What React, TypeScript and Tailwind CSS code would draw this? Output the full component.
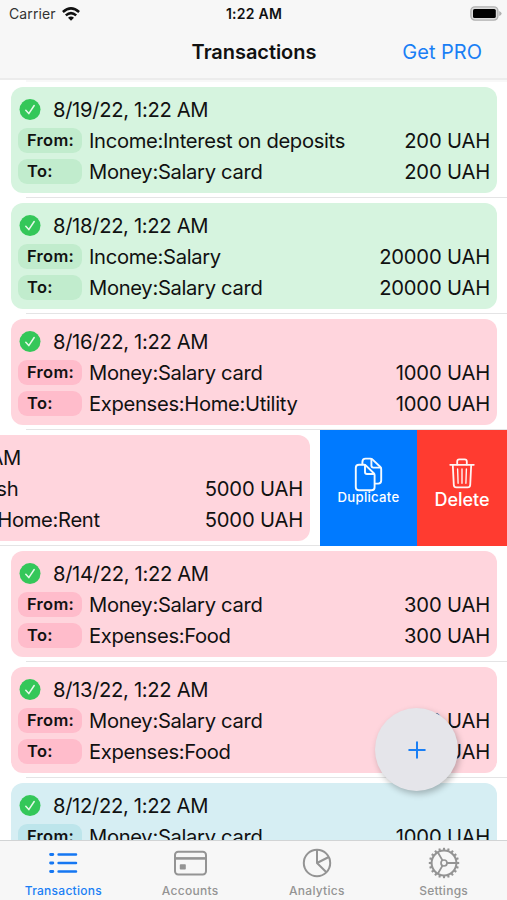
import React from "react";

type Tone = "green" | "pink" | "blue";

interface Transaction {
  date: string;
  from: string;
  to: string;
  amount: string;
  tone: Tone;
  swiped?: boolean;
}

const transactions: Transaction[] = [
  { date: "8/19/22, 1:22 AM", from: "Income:Interest on deposits", to: "Money:Salary card", amount: "200 UAH", tone: "green" },
  { date: "8/18/22, 1:22 AM", from: "Income:Salary", to: "Money:Salary card", amount: "20000 UAH", tone: "green" },
  { date: "8/16/22, 1:22 AM", from: "Money:Salary card", to: "Expenses:Home:Utility", amount: "1000 UAH", tone: "pink" },
  { date: "8/15/22, 1:22 AM", from: "Money:Cash", to: "Expenses:Home:Rent", amount: "5000 UAH", tone: "pink", swiped: true },
  { date: "8/14/22, 1:22 AM", from: "Money:Salary card", to: "Expenses:Food", amount: "300 UAH", tone: "pink" },
  { date: "8/13/22, 1:22 AM", from: "Money:Salary card", to: "Expenses:Food", amount: "300 UAH", tone: "pink" },
  { date: "8/12/22, 1:22 AM", from: "Money:Salary card", to: "Money:Cash", amount: "1000 UAH", tone: "blue" },
];

const cardTone: Record<Tone, string> = {
  green: "bg-[#d6f4df]",
  pink: "bg-[#ffd5dd]",
  blue: "bg-[#d6eef3]",
};

const pillTone: Record<Tone, string> = {
  green: "bg-[#c1eccd]",
  pink: "bg-[#ffbccb]",
  blue: "bg-[#bde5eb]",
};

function CheckBadge() {
  return (
    <svg className="h-[22px] w-[22px] shrink-0" viewBox="0 0 22 22" fill="none">
      <circle cx="11" cy="10.6" r="10.5" fill="#34c759" />
      <path d="M6.8 11.3 L9.8 14.6 L15.2 6.5" stroke="#e6f9ea" strokeWidth="1.5" strokeLinecap="round" strokeLinejoin="round" />
    </svg>
  );
}

function Posting({ label, account, amount, tone }: { label: string; account: string; amount: string; tone: Tone }) {
  return (
    <div className="flex h-[31px] items-center leading-[31px]">
      <div className={`flex h-[25px] w-16 shrink-0 items-center rounded-[9px] pl-[9px] text-[16.5px] font-semibold tracking-[0.3px] ${pillTone[tone]}`}>
        {label}
      </div>
      <span className="ml-[7px] flex-1">{account}</span>
      <span className="tracking-[-0.18px]">{amount}</span>
    </div>
  );
}

function Card({ t }: { t: Transaction }) {
  return (
    <div className="flex w-[507px] shrink-0 py-[5px] pr-[10px] pl-[11px]">
      <div className={`h-[106px] flex-1 rounded-xl pt-[7px] pr-[7px] pl-[7px] text-[20.2px] leading-[32px] tracking-[-0.32px] whitespace-nowrap text-[#111] ${cardTone[t.tone]}`}>
        <div className="flex h-[31px] items-center pl-[1px]">
          <CheckBadge />
          <span className="ml-[12px]">{t.date}</span>
        </div>
        <Posting label="From:" account={t.from} amount={t.amount} tone={t.tone} />
        <Posting label="To:" account={t.to} amount={t.amount} tone={t.tone} />
      </div>
    </div>
  );
}

function SwipeActions() {
  return (
    <>
      <div className="flex w-[97px] shrink-0 flex-col items-center bg-[#007aff] pt-[27px] text-white">
        <svg className="h-[35px] w-[30px] shrink-0" viewBox="0 0 30 35" fill="none" stroke="#f4faff" strokeWidth="1.9" strokeLinejoin="round" strokeLinecap="round">
          <path d="M8.4 7.2 V5 Q8.4 1.6 11.6 1.6 H16.4 Q17.6 1.6 18.4 2.4 L26.4 10 Q27.2 10.8 27.2 12 V23.6 Q27.2 26.6 24.2 26.6 H21.4" />
          <path d="M17.4 2 V8.6 Q17.4 10.6 19.4 10.6 H26.6" />
          <path d="M5 7.8 H10 Q11.2 7.8 12 8.6 L19.8 16.2 Q20.6 17 20.6 18.2 V30.2 Q20.6 33.2 17.6 33.2 H5 Q1.8 33.2 1.8 30.2 V10.8 Q1.8 7.8 5 7.8 Z" />
          <path d="M11 8.2 V15 Q11 17 13 17 H20.2" />
        </svg>
        <span className="-mt-[3px] text-[13.2px] leading-4 font-medium tracking-[0.25px]">Duplicate</span>
      </div>
      <div className="flex w-[90px] shrink-0 flex-col items-center bg-[#ff3b30] pt-[27px] text-white">
        <svg className="h-[32px] w-[26px] shrink-0" viewBox="0 0 26 32" fill="none" stroke="#fff4f3" strokeWidth="1.8" strokeLinejoin="round" strokeLinecap="round">
          <path d="M1.2 7.8 H24.8" />
          <path d="M8.2 7.6 V4.4 Q8.2 2.3 10.3 2.3 H15.7 Q17.8 2.3 17.8 4.4 V7.6" />
          <path d="M3.8 8 L4.8 28 Q5 30.4 7.4 30.4 H18.6 Q21 30.4 21.2 28 L22.2 8" />
          <path d="M8.6 12 L9.1 26.2 M13 12 V26.2 M17.4 12 L16.9 26.2" strokeWidth="1.4" />
        </svg>
        <span className="text-[18px] leading-[22px] font-medium">Delete</span>
      </div>
    </>
  );
}

function TransactionRow({ t }: { t: Transaction }) {
  if (t.swiped) {
    return (
      <div className="flex h-[116px] shrink-0 overflow-hidden">
        <div className="-ml-[187px] flex shrink-0 border-b border-[#e4e4e5]">
          <Card t={t} />
        </div>
        <SwipeActions />
      </div>
    );
  }
  return (
    <div className="flex h-[116px] shrink-0 flex-col">
      <div className="h-[115px]">
        <Card t={t} />
      </div>
      <div className="ml-[26px] h-px bg-[#e4e4e5]" />
    </div>
  );
}

function ListIcon() {
  return (
    <svg className="h-8 w-8" viewBox="0 0 32 32" fill="none" stroke="#1577f2" strokeWidth="2.5" strokeLinecap="round">
      <path d="M3.6 7.5 H5.8 M3.6 16 H5.8 M3.6 24.5 H5.8" strokeWidth="2.9" />
      <path d="M11.6 7.5 H29 M11.6 16 H29 M11.6 24.5 H29" />
    </svg>
  );
}

function CardIcon() {
  return (
    <svg className="h-8 w-9" viewBox="0 0 36 32" fill="none" stroke="#949494" strokeWidth="2">
      <rect x="3" y="4.8" width="31" height="22.6" rx="3.2" />
      <path d="M3 11.4 H34" strokeWidth="2.6" />
      <rect x="7.8" y="17.2" width="6" height="5.4" rx="0.8" fill="#949494" stroke="none" />
    </svg>
  );
}

function PieIcon() {
  return (
    <svg className="h-8 w-8" viewBox="0 0 32 32" fill="none" stroke="#949494" strokeWidth="2" strokeLinejoin="round">
      <circle cx="16" cy="16" r="13.2" />
      <path d="M16 2.8 V16 L25.4 25.2 M16 16 L27.8 10" />
    </svg>
  );
}

const gearTeeth = Array.from({ length: 20 }, (_, i) => i * 18);

function GearIcon() {
  return (
    <svg className="h-8 w-8" viewBox="0 0 32 32" fill="none" stroke="#949494" strokeWidth="2">
      <circle cx="16" cy="16" r="12.4" />
      <circle cx="16" cy="16" r="3" strokeWidth="1.7" />
      <path d="M19 16 H28.4 M14.5 13.4 L9.8 5.3 M14.5 18.6 L9.8 26.7" strokeWidth="1.8" />
      {gearTeeth.map((angle) => (
        <path key={angle} d="M16 3.6 V0.8" strokeWidth="2.1" transform={`rotate(${angle} 16 16)`} />
      ))}
    </svg>
  );
}

function Tab({ icon, label, active }: { icon: React.ReactNode; label: string; active?: boolean }) {
  return (
    <div className={`flex flex-1 flex-col items-center pt-[6px] text-[12px] font-medium tracking-[0.27px] ${active ? "text-[#1a7ff5]" : "text-[#949494]"}`}>
      {icon}
      <span className="mt-[4px] leading-4">{label}</span>
    </div>
  );
}

export default function App() {
  return (
    <div className="relative flex h-[900px] w-[507px] flex-col overflow-hidden bg-white font-['Inter','Liberation_Sans',sans-serif]">
      <header className="flex h-[80px] shrink-0 flex-col border-b-2 border-[#ececec] bg-[#f7f7f7]">
        <div className="grid h-[27px] grid-cols-3 items-center text-[14px]">
          <div className="flex items-center gap-[6px] pl-[9px] tracking-[0.1px] text-[#333]">
            <span>Carrier</span>
            <svg className="h-[14px] w-[18px]" viewBox="0 0 18 14" fill="none" stroke="#111" strokeWidth="2.5">
              <path d="M0.9 5 Q9 -2.2 17.1 5" />
              <path d="M3.8 8.4 Q9 3.8 14.2 8.4" />
              <path d="M9 13.8 L6 10.8 Q9 8.2 12 10.8 Z" fill="#111" stroke="none" />
            </svg>
          </div>
          <div className="pl-px text-center font-semibold tracking-[0.25px] text-[#111]">1:22 AM</div>
          <div className="flex justify-end pr-[5px]">
            <svg className="h-[15px] w-[32px]" viewBox="0 0 32 15">
              <rect x="0.9" y="0.9" width="27" height="13.2" rx="4" fill="#dcdcdc" stroke="#b0b0b0" strokeWidth="1.4" />
              <rect x="3" y="3" width="22.8" height="9" rx="1.6" fill="#000" />
              <path d="M29.2 5 Q31.6 6 31.6 7.5 Q31.6 9 29.2 10 Z" fill="#b0b0b0" />
            </svg>
          </div>
        </div>
        <div className="grid h-[50px] grid-cols-[1fr_auto_1fr] items-center text-[20px]">
          <div />
          <h1 className="pl-px font-semibold tracking-[-0.05px] text-[#111]">Transactions</h1>
          <div className="pr-[25px] text-right text-[#1a7ff5]">Get PRO</div>
        </div>
      </header>
      <main className="flex min-h-0 flex-1 flex-col overflow-hidden">
        <div className="ml-[26px] h-[2px] shrink-0 bg-[#f8f8f8]" />
        {transactions.map((t) => (
          <TransactionRow key={t.date} t={t} />
        ))}
      </main>
      <nav className="flex h-[60px] shrink-0 border-t border-[#d2d4d5] bg-[#f7f7f7]">
        <Tab icon={<ListIcon />} label="Transactions" active />
        <Tab icon={<CardIcon />} label="Accounts" />
        <Tab icon={<PieIcon />} label="Analytics" />
        <Tab icon={<GearIcon />} label="Settings" />
      </nav>
      <button className="absolute top-[708px] left-[375px] flex h-[83px] w-[83px] items-center justify-center rounded-full bg-[#e5e5ea] shadow-[2px_3px_6px_rgba(0,0,0,0.25)]">
        <svg className="h-[18px] w-[18px]" viewBox="0 0 18 18" stroke="#1a7ff5" strokeWidth="2" strokeLinecap="round">
          <path d="M9 1.2 V16.8 M1.2 9 H16.8" />
        </svg>
      </button>
    </div>
  );
}
